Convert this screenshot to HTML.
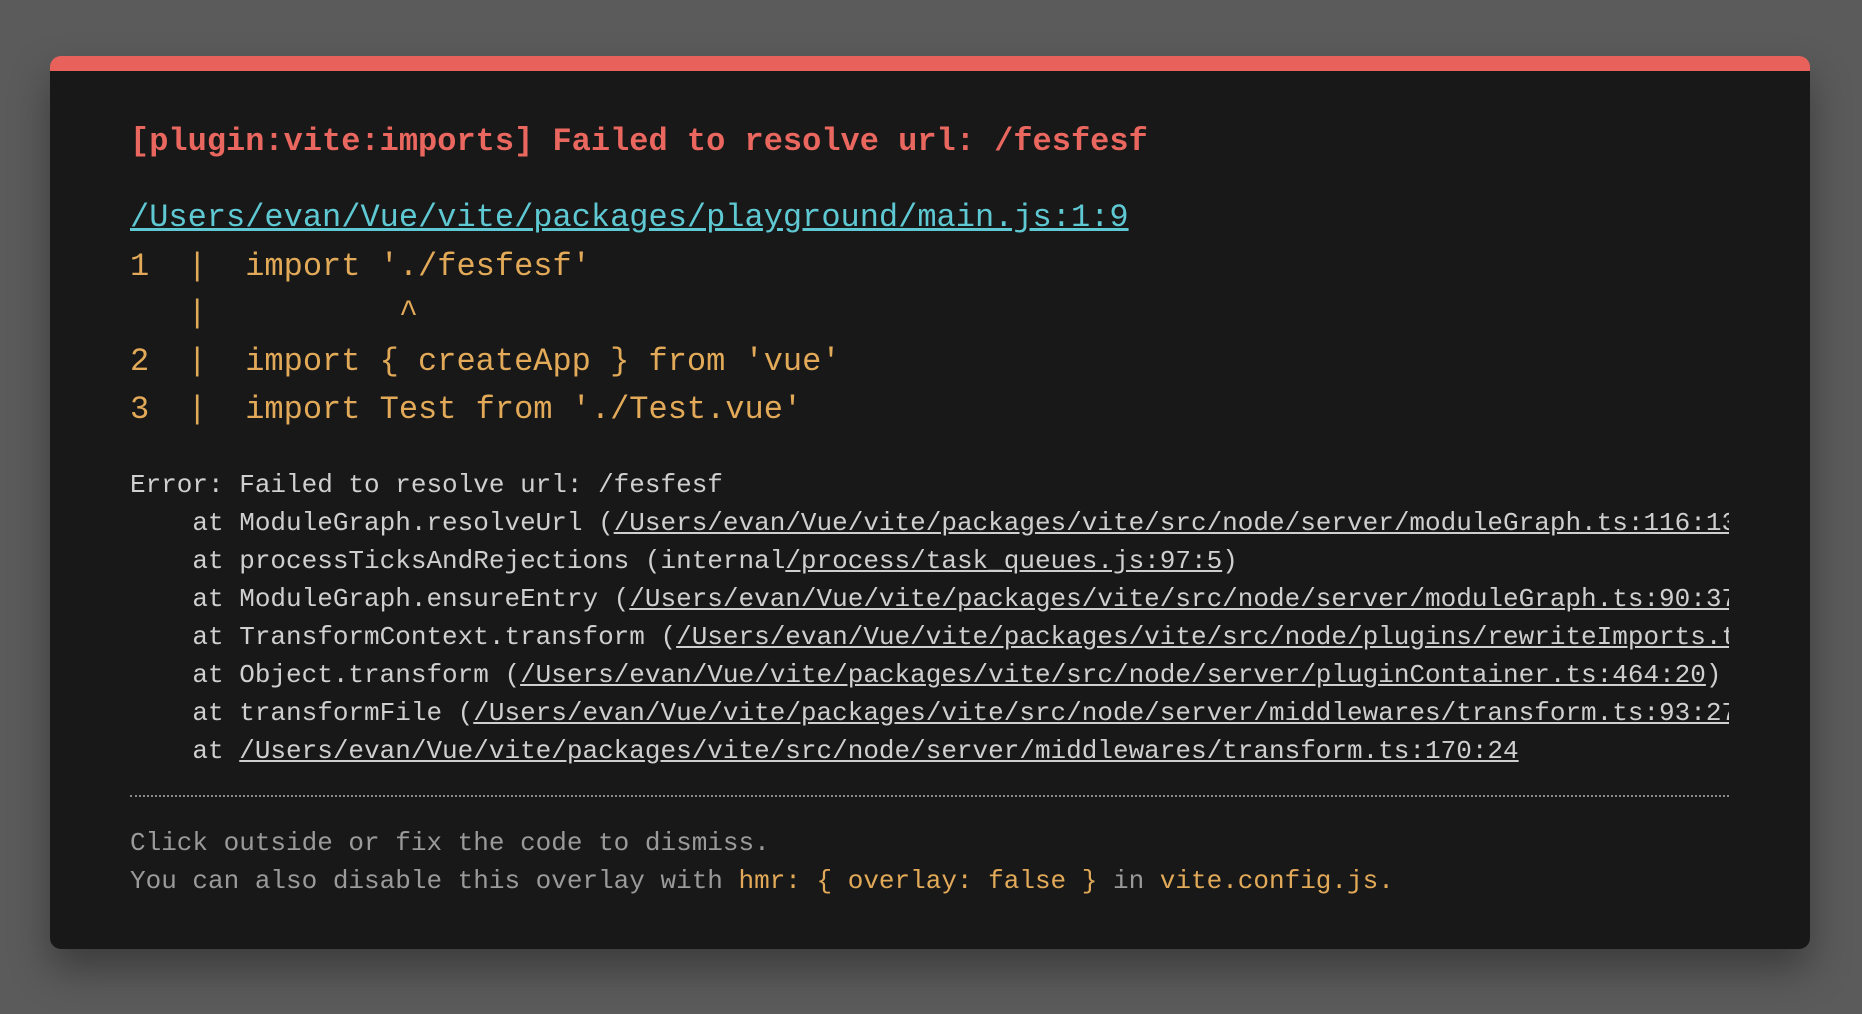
<!DOCTYPE html>
<html><head><meta charset="utf-8"><style>
html,body{margin:0;padding:0;}
body{width:1862px;height:1014px;background:#5b5b5b;overflow:hidden;position:relative;font-family:"Liberation Mono","DejaVu Sans Mono",monospace;}
.panel{position:absolute;left:50px;top:56px;width:1760px;height:893px;background:#181818;border-radius:11px;border-top:15px solid #e8615b;box-sizing:border-box;box-shadow:0 20px 40px rgba(0,0,0,.35);overflow:hidden;}
.l{position:absolute;left:80px;white-space:pre;}
.clip{position:absolute;left:80px;width:1599px;overflow:hidden;white-space:pre;}
.t{font-size:32px;line-height:40px;color:#e9675f;font-weight:bold;}
.f{font-size:32px;line-height:48px;color:#e2aa58;}
.a{font-size:32px;line-height:40px;color:#5ec9d3;text-decoration:underline;}
.s{font-size:26px;line-height:38px;color:#cfcfcf;}
.s u{text-decoration:underline;}
.tip{font-size:26px;line-height:38px;color:#9a9a9a;}
.y{color:#e2aa58;}
.hr{position:absolute;left:80px;width:1599px;top:724px;border-top:2px dotted #8a8a8a;}
</style></head><body>
<div class="panel">
<div class="l t" style="top:51px">[plugin:vite:imports] Failed to resolve url: /fesfesf</div>
<div class="l a" style="top:127px">/Users/evan/Vue/vite/packages/playground/main.js:1:9</div>
<div class="l f" style="top:172px">1  |  import './fesfesf'</div>
<div class="l f" style="top:219px">   |          ^</div>
<div class="l f" style="top:267px">2  |  import { createApp } from 'vue'</div>
<div class="l f" style="top:315px">3  |  import Test from './Test.vue'</div>
<div class="clip s" style="top:395px">Error: Failed to resolve url: /fesfesf</div>
<div class="clip s" style="top:433px">    at ModuleGraph.resolveUrl (<u>/Users/evan/Vue/vite/packages/vite/src/node/server/moduleGraph.ts:116:13</u>)</div>
<div class="clip s" style="top:471px">    at processTicksAndRejections (internal<u>/process/task_queues.js:97:5</u>)</div>
<div class="clip s" style="top:509px">    at ModuleGraph.ensureEntry (<u>/Users/evan/Vue/vite/packages/vite/src/node/server/moduleGraph.ts:90:37</u>)</div>
<div class="clip s" style="top:547px">    at TransformContext.transform (<u>/Users/evan/Vue/vite/packages/vite/src/node/plugins/rewriteImports.ts:1</u>)</div>
<div class="clip s" style="top:585px">    at Object.transform (<u>/Users/evan/Vue/vite/packages/vite/src/node/server/pluginContainer.ts:464:20</u>)</div>
<div class="clip s" style="top:623px">    at transformFile (<u>/Users/evan/Vue/vite/packages/vite/src/node/server/middlewares/transform.ts:93:27</u>)</div>
<div class="clip s" style="top:661px">    at <u>/Users/evan/Vue/vite/packages/vite/src/node/server/middlewares/transform.ts:170:24</u></div>
<div class="hr"></div>
<div class="l tip" style="top:753px">Click outside or fix the code to dismiss.</div>
<div class="l tip" style="top:791px">You can also disable this overlay with <span class="y">hmr: { overlay: false }</span> in <span class="y">vite.config.js.</span></div>
</div>
</body></html>
